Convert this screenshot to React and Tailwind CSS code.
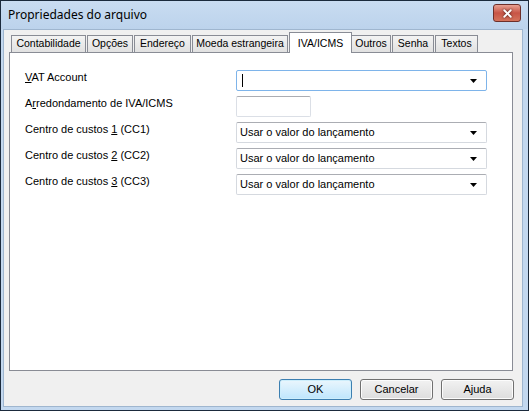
import { X } from "lucide-react";

const TABS = [
  { label: "Contabilidade", w: "w-[75px]" },
  { label: "Opções", w: "w-[46px] ml-[1px]" },
  { label: "Endereço", w: "w-[57px] ml-[1px]" },
  { label: "Moeda estrangeira", w: "w-[96px] ml-[1px]" },
  { label: "IVA/ICMS", w: "w-[63px] ml-[1px]", active: true },
  { label: "Outros", w: "w-[40px] -ml-px" },
  { label: "Senha", w: "w-[42px] ml-[1px]" },
  { label: "Textos", w: "w-[43px] ml-[1px]" },
];

const tabFont = "font-['Liberation_Sans',sans-serif] text-[10.5px]";
const uiFont = "font-['Liberation_Sans',sans-serif] text-[11px]";

function Arrow() {
  return (
    <svg width="7" height="4" viewBox="0 0 7 4" className="shrink-0">
      <path d="M0 0h7L3.5 4z" fill="#000" />
    </svg>
  );
}

function Combo({ value, focused }) {
  return (
    <div
      className={`h-[21px] w-[251px] flex items-center pl-[3px] pr-[4px] rounded-[2px] border bg-white ${
        focused ? "border-[#7eb4ea]" : "border-[#d5d9df] border-t-[#abadb3]"
      }`}
    >
      <div className={`flex-1 text-black ${uiFont} leading-none`}>
        {focused ? <span className="inline-block w-px h-[13px] bg-black align-middle ml-[2px]" /> : value}
      </div>
      <div className="w-[17px] flex justify-center">
        <Arrow />
      </div>
    </div>
  );
}

function Row({ label, children }) {
  return (
    <div className="flex items-start h-[21px]">
      <div className={`w-[211px] text-black ${uiFont} leading-[14px]`}>{label}</div>
      {children}
    </div>
  );
}

function Button({ children, primary }) {
  return (
    <button
      className={`w-[73px] h-[21px] rounded-[3px] border text-black ${uiFont} ${
        primary
          ? "border-[#3c7fb1] bg-gradient-to-b from-[#eaf6fd] to-[#bee6fd] shadow-[inset_0_0_0_1px_#cdeefc]"
          : "border-[#707070] bg-gradient-to-b from-[#f2f2f2] to-[#dddddd] shadow-[inset_0_0_0_1px_#fcfcfc]"
      }`}
    >
      {children}
    </button>
  );
}

export default function App() {
  return (
    <div className="w-[529px] h-[411px] border border-[#1b2a3c] bg-[#c3d8ef] flex flex-col">
      {/* Title bar */}
      <div className="h-[28px] flex items-center pl-[7px] pr-[7px] bg-gradient-to-b from-[#c9dcf1] to-[#bcd3ec] shrink-0">
        <span className="flex-1 font-['Noto_Sans',sans-serif] text-[12px] text-black">Propriedades do arquivo</span>
        <div className="w-[28px] h-[18px] mt-[-4px] rounded-[3px] border border-[#6d2f2a] bg-gradient-to-b from-[#e8a193] via-[#c75446] to-[#d4735c] flex items-center justify-center">
          <X size={13} strokeWidth={3.4} color="#fff" className="drop-shadow-[0_0_1px_#3b1410]" />
        </div>
      </div>

      {/* Client area */}
      <div className="flex-1 ml-[2px] mr-[5px] mb-[3px] bg-[#f0f0f0] border border-[#9fb6cf] flex flex-col px-[5px] pt-[1px]">
        {/* Tab strip */}
        <div className="flex items-end h-[21px] pl-[2px]">
          {TABS.map((t) =>
            t.active ? (
              <div
                key={t.label}
                className={`${t.w} h-[21px] -mb-px relative z-10 bg-white border border-b-0 border-[#898c95] flex items-start justify-center pt-[3px] text-black ${tabFont}`}
              >
                {t.label}
              </div>
            ) : (
              <div
                key={t.label}
                className={`${t.w} h-[17px] border border-b-0 border-[#898c95] bg-gradient-to-b from-[#f3f3f3] to-[#e1e1e1] flex items-center justify-center text-black ${tabFont}`}
              >
                {t.label}
              </div>
            )
          )}
        </div>

        {/* Tab panel */}
        <div className="h-[319px] w-[504px] bg-white border border-[#898c95] pl-[15px] pt-[17px] flex flex-col gap-[5px]">
          <Row label={<><u>V</u>AT Account</>}>
            <Combo focused />
          </Row>
          <Row label={<>A<u>r</u>redondamento de IVA/ICMS</>}>
            <div className="h-[21px] w-[75px] rounded-[2px] border border-[#dbdfe6] border-t-[#abadb3] bg-white" />
          </Row>
          <Row label={<>Centro de custos <u>1</u> (CC1)</>}>
            <Combo value="Usar o valor do lançamento" />
          </Row>
          <Row label={<>Centro de custos <u>2</u> (CC2)</>}>
            <Combo value="Usar o valor do lançamento" />
          </Row>
          <Row label={<>Centro de custos <u>3</u> (CC3)</>}>
            <Combo value="Usar o valor do lançamento" />
          </Row>
        </div>

        {/* Dialog buttons */}
        <div className="flex justify-end gap-[8px] pr-[3px] mt-[8px]">
          <Button primary>OK</Button>
          <Button>Cancelar</Button>
          <Button>Ajuda</Button>
        </div>
      </div>
    </div>
  );
}
